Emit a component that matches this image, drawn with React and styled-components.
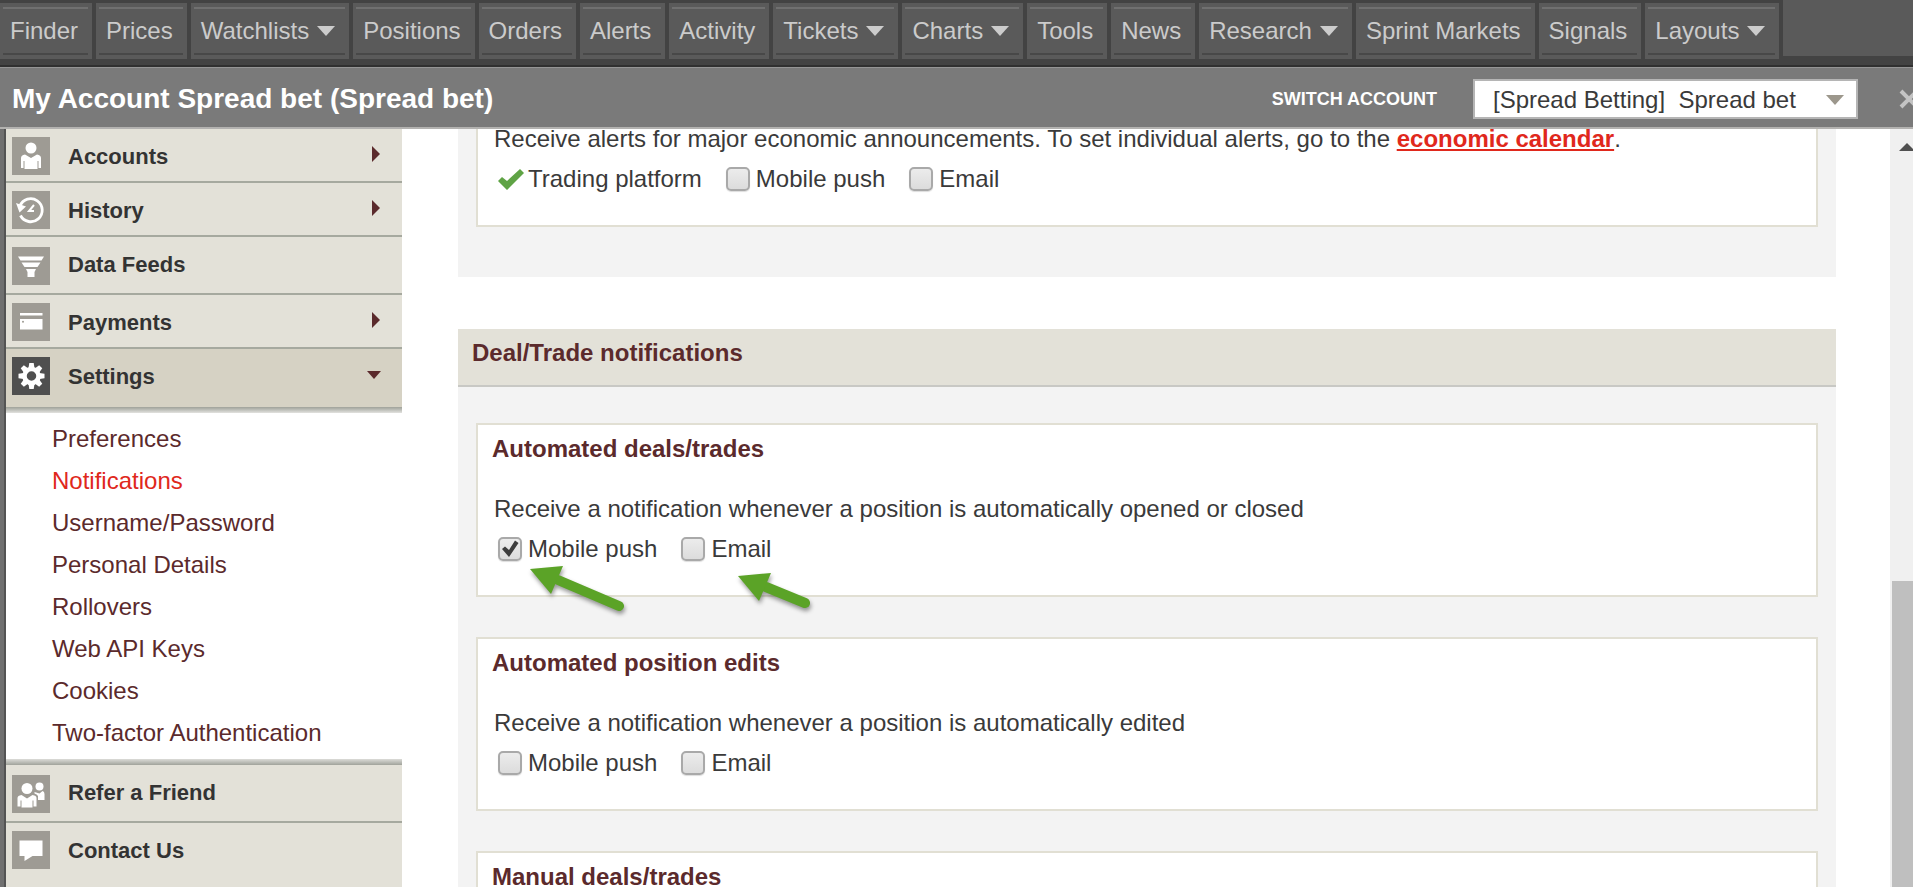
import React from "react";
import styled, { createGlobalStyle } from "styled-components";

const tabs = [
  { name: "Finder" },
  { name: "Prices" },
  { name: "Watchlists", menu: true },
  { name: "Positions" },
  { name: "Orders" },
  { name: "Alerts" },
  { name: "Activity" },
  { name: "Tickets", menu: true },
  { name: "Charts", menu: true },
  { name: "Tools" },
  { name: "News" },
  { name: "Research", menu: true },
  { name: "Sprint Markets" },
  { name: "Signals" },
  { name: "Layouts", menu: true },
];

const settingsLinks = [
  "Preferences",
  "Notifications",
  "Username/Password",
  "Personal Details",
  "Rollovers",
  "Web API Keys",
  "Cookies",
  "Two-factor Authentication",
];

const gearTeeth = [0, 45, 90, 135, 180, 225, 270, 315];

const icons = {
  accounts: (
    <g fill="#fff">
      <circle cx="19" cy="11" r="5.5" />
      <path d="M9 31V21q0-3 4-3.500l6 3.500 6-3.500q4 .5 4 3.500v10h-2.500v-7h-1v8h-13v-8h-1v7z" />
    </g>
  ),
  history: (
    <g fill="none" stroke="#fff" strokeWidth="2.800">
      <path d="M8 15a11.500 11.500 0 1 1 .5 9.500" />
      <path d="M4 12l10 3.500-6.500 6z" fill="#fff" stroke="none" />
      <path d="M22 14l-5 6h5" strokeWidth="2" />
    </g>
  ),
  feeds: (
    <g fill="#fff">
      <path d="M6 9.500h26l-2.500 4h-21z" />
      <path d="M9.500 15.500h19l-3 4.500h-13z" />
      <path d="M14 22h10l-1.500 3v5h-7v-5z" />
    </g>
  ),
  payments: (
    <g fill="#fff">
      <path d="M8 10h22.500v2.500H8z" />
      <path d="M8 16h22.500v10.500H8z" />
      <circle cx="11" cy="18.700" r="1" fill="#9e9b94" />
    </g>
  ),
  settings: (
    <g fill="#fff">
      {gearTeeth.map((a) => (
        <path
          key={a}
          d="M17.300 6h4.400l.8 5h-6z"
          transform={`rotate(${a} 19.500 19)`}
        />
      ))}
      <circle cx="19.500" cy="19" r="7" fill="none" stroke="#fff" strokeWidth="4.500" />
    </g>
  ),
  refer: (
    <g fill="#fff">
      <circle cx="27.500" cy="11.500" r="4" />
      <path d="M22.500 17l5 1.500 3-2.500q2 .5 2 3v6h-6.500v-4q-1-2-3.500-2.500z" />
      <circle cx="15" cy="13.500" r="5.500" />
      <path d="M5.500 31.500V23q0-2.500 4-3l5.500 3.500 5.500-3.500q4 .5 4 3v8.500h-3v-6h-1v7h-11v-7h-1v6z" />
    </g>
  ),
  contact: <path d="M7.500 9.500h23v15.500H20.500l-8 5v-5h-5z" fill="#fff" />,
};

const MenuItem = ({ icon, name, tall, low, active, last, arrow }) => (
  <Item href="#" $tall={tall} $active={active} $last={last}>
    <Tile $active={active} $low={low} viewBox="0 0 38 38" aria-hidden="true">
      {icons[icon]}
    </Tile>
    <ItemText>{name}</ItemText>
    {arrow === "right" && (
      <RightArrow viewBox="0 0 8 16">
        <path d="M0 0l8 8-8 8z" fill="#5b2a2c" />
      </RightArrow>
    )}
    {arrow === "down" && (
      <DownArrow viewBox="0 0 16 8">
        <path d="M1 0h14L8 8z" fill="#5b2a2c" />
      </DownArrow>
    )}
  </Item>
);

const Tick = ({ label, checked }) => (
  <Option>
    <BoxWrap>
      <Checkbox type="checkbox" defaultChecked={checked} />
      {checked && (
        <Mark viewBox="0 0 24 24">
          <path d="M4 12l3-2.500 4 3.500 6-9.500 3.500 2.500L11 20z" fill="#3d3d3d" />
        </Mark>
      )}
    </BoxWrap>
    {label}
  </Option>
);

const App = () => {
  return (
    <Page>
      <GlobalStyle />
      <Nav>
        {tabs.map((tab) => (
          <Tab key={tab.name}>
            {tab.name}
            {tab.menu && (
              <Caret viewBox="0 0 18 10">
                <path d="M0 0h18L9 10z" fill="#ccc" />
              </Caret>
            )}
          </Tab>
        ))}
        <NavRest />
      </Nav>
      <Header>
        <h1>My Account Spread bet (Spread bet)</h1>
        <SwitchLabel htmlFor="account">SWITCH ACCOUNT</SwitchLabel>
        <SelectWrap>
          <Select id="account">
            <option>{"[Spread Betting]\u00a0 Spread bet"}</option>
          </Select>
          <SelectCaret viewBox="0 0 18 10">
            <path d="M0 0h18L9 10z" fill="#9c978c" />
          </SelectCaret>
        </SelectWrap>
        <Close aria-label="Close">
          <svg width="20" height="20" viewBox="0 0 20 20">
            <path d="M2 2l16 16M18 2L2 18" stroke="#c4c4c4" strokeWidth="4" />
          </svg>
        </Close>
      </Header>
      <Main>
        <Sidebar>
          <MenuItem icon="accounts" name="Accounts" arrow="right" />
          <MenuItem icon="history" name="History" arrow="right" />
          <MenuItem icon="feeds" name="Data Feeds" tall low />
          <MenuItem icon="payments" name="Payments" arrow="right" />
          <MenuItem icon="settings" name="Settings" tall active last arrow="down" />
          <SubMenu>
            {settingsLinks.map((link) => (
              <SubLink href="#" key={link} $current={link === "Notifications"}>
                {link}
              </SubLink>
            ))}
          </SubMenu>
          <MenuItem icon="refer" name="Refer a Friend" tall low />
          <MenuItem icon="contact" name="Contact Us" tall last />
        </Sidebar>
        <Content>
          <Section $scrolled>
            <Card $open>
              <CardText>
                Receive alerts for major economic announcements. To set
                individual alerts, go to the{" "}
                <CalendarLink href="#">economic calendar</CalendarLink>.
              </CardText>
              <Options>
                <Fixed>
                  <svg width="26" height="24" viewBox="0 0 26 24">
                    <path d="M0 14l4-4 5 4L22 2l4 4L9 23z" fill="#5fa345" />
                  </svg>
                  Trading platform
                </Fixed>
                <Tick label="Mobile push" />
                <Tick label="Email" />
              </Options>
            </Card>
          </Section>
          <Section>
            <SectionTitle>Deal/Trade notifications</SectionTitle>
            <Cards>
              <Card>
                <h3>Automated deals/trades</h3>
                <CardText>
                  Receive a notification whenever a position is automatically
                  opened or closed
                </CardText>
                <Options>
                  <Tick label="Mobile push" checked />
                  <Tick label="Email" />
                </Options>
                <Pointer $left={48} $top={138} viewBox="0 0 104 56">
                  <path d="M32 17l61 26" stroke="#5ba327" strokeWidth="10" strokeLinecap="round" />
                  <path d="M4 6l33-3-12 28z" fill="#5ba327" />
                </Pointer>
                <Pointer $left={256} $top={145} viewBox="0 0 104 56">
                  <path d="M32 17l39 16" stroke="#5ba327" strokeWidth="10" strokeLinecap="round" />
                  <path d="M4 6l33-3-12 28z" fill="#5ba327" />
                </Pointer>
              </Card>
              <Card>
                <h3>Automated position edits</h3>
                <CardText>
                  Receive a notification whenever a position is automatically
                  edited
                </CardText>
                <Options>
                  <Tick label="Mobile push" />
                  <Tick label="Email" />
                </Options>
              </Card>
              <Card>
                <h3>Manual deals/trades</h3>
              </Card>
            </Cards>
          </Section>
        </Content>
        <Scrollbar>
          <ScrollUp>
            <svg width="16" height="8" viewBox="0 0 16 8">
              <path d="M0 8l8-8 8 8z" fill="#505050" />
            </svg>
          </ScrollUp>
          <Thumb />
        </Scrollbar>
      </Main>
    </Page>
  );
};

export default App;

const GlobalStyle = createGlobalStyle`
  * {
    box-sizing: border-box;
  }
  body {
    margin: 0;
    font-family: "Liberation Sans", Arial, sans-serif;
    font-size: 24px;
    color: #3a3a3a;
  }
  button, select, input {
    font: inherit;
    margin: 0;
  }
  h1, h2, h3, p {
    margin: 0;
  }
  svg {
    display: block;
    flex: none;
  }
`;

const Page = styled.div`
  height: 100vh;
  display: flex;
  flex-direction: column;
  overflow: hidden;
  background: #707070;
`;
const Nav = styled.nav`
  flex: none;
  height: 67px;
  display: flex;
  align-items: flex-start;
  gap: 4px;
  background: #434343;
  border-bottom: 2px solid #303030;
`;
const Tab = styled.button`
  flex: none;
  height: 56px;
  margin-top: 3px;
  padding: 0 14px 0 10px;
  display: flex;
  align-items: center;
  gap: 8px;
  border: none;
  color: #cbcbcb;
  white-space: nowrap;
  background:
    linear-gradient(#707070, #707070) 3px 4px / calc(100% - 7px) 2px no-repeat,
    linear-gradient(#484848, #484848) 3px 50px / calc(100% - 7px) 2px no-repeat,
    #5a5a5a;
`;
const Caret = styled.svg`
  width: 18px;
  height: 10px;
`;
const NavRest = styled.div`
  flex: 1;
  height: 56px;
  background: #5a5a5a;
`;
const Header = styled.header`
  flex: none;
  height: 62px;
  padding: 3px 0 0 12px;
  display: flex;
  align-items: center;
  overflow: hidden;
  background: #7a7a7a;
  border-top: 1px solid #959595;
  border-bottom: 2px solid #b3b2b0;

  h1 {
    flex: 1;
    font-size: 28px;
    line-height: 32px;
    color: #fff;
  }
`;
const SwitchLabel = styled.label`
  margin-right: 36px;
  font-size: 18px;
  font-weight: bold;
  color: #fff;
`;
const SelectWrap = styled.div`
  position: relative;
`;
const Select = styled.select`
  appearance: none;
  display: block;
  width: 385px;
  height: 40px;
  padding: 0 48px 0 18px;
  border: 2px solid #b5b5b5;
  border-radius: 0;
  background: #fff;
  color: #3a3a3a;
`;
const SelectCaret = styled.svg`
  position: absolute;
  right: 14px;
  top: 16px;
  width: 18px;
  height: 10px;
  pointer-events: none;
`;
const Close = styled.button`
  width: 55px;
  padding: 0 0 0 41px;
  border: none;
  background: none;
  overflow: hidden;
`;
const Main = styled.div`
  flex: 1;
  min-height: 0;
  display: flex;
  margin-left: 4px;
  border-left: 2px solid #545454;
  background: #fff;
`;
const Sidebar = styled.aside`
  flex: none;
  width: 396px;
  overflow: hidden;
  background: #e3e1d8;
`;
const Item = styled.a`
  height: ${(props) => (props.$tall ? 58 : 54)}px;
  padding: 8px 20px 0 6px;
  display: flex;
  align-items: flex-start;
  gap: 18px;
  text-decoration: none;
  color: #333;
  background: ${(props) => (props.$active ? "#d6d2c4" : "#e3e1d8")};
  border-bottom: ${(props) => (props.$last ? "none" : "2px solid #a6a99f")};
`;
const Tile = styled.svg`
  width: 38px;
  height: 38px;
  margin-top: ${(props) => (props.$low ? 2 : 0)}px;
  background: ${(props) => (props.$active ? "#4f4f4f" : "#9e9b94")};
`;
const ItemText = styled.span`
  flex: 1;
  padding-top: 7px;
  font-size: 22px;
  font-weight: bold;
  line-height: 26px;
`;
const RightArrow = styled.svg`
  width: 8px;
  height: 16px;
  margin: 9px 2px 0 0;
`;
const DownArrow = styled.svg`
  width: 16px;
  height: 8px;
  margin-top: 14px;
`;
const SubMenu = styled.div`
  padding: 5px 0 5px 46px;
  display: flex;
  flex-direction: column;
  background: #fff;
  border-top: 6px solid #a6a89f;
  border-bottom: 6px solid #a6a89f;
  border-image: linear-gradient(
      #a0a29a 0,
      #b4b6af 2px,
      #e2e2df 6px,
      #fff 6px,
      #fff calc(100% - 6px),
      #dcdcd8 calc(100% - 6px),
      #b4b6af calc(100% - 2px),
      #a0a29a 100%
    )
    6 0;
`;
const SubLink = styled.a`
  line-height: 42px;
  text-decoration: none;
  color: ${(props) => (props.$current ? "#e0281c" : "#5b2a2c")};
`;
const Content = styled.main`
  flex: 1;
  min-width: 0;
  padding: 0 54px 0 56px;
  display: flex;
  flex-direction: column;
  gap: 52px;
  overflow: hidden;
`;
/* $scrolled: the section is cut by the top of the scroll area */
const Section = styled.section`
  flex: none;
  margin-top: ${(props) => (props.$scrolled ? -10 : 0)}px;
  padding-bottom: ${(props) => (props.$scrolled ? 50 : 0)}px;
  background: #f3f3f3;
  ${(props) => props.$scrolled && "padding-left: 18px; padding-right: 18px;"}
`;
const SectionTitle = styled.h2`
  padding: 4px 14px 12px;
  font-size: 24px;
  line-height: 40px;
  color: #5b2a2c;
  background: #e3e1d8;
  border-bottom: 2px solid #c8c8c4;
`;
const Cards = styled.div`
  padding: 36px 18px;
  display: flex;
  flex-direction: column;
  gap: 40px;
`;
const Card = styled.div`
  position: relative;
  padding: ${(props) => (props.$open ? 0 : 4)}px 14px 26px;
  background: #fff;
  border: 2px solid #e1dfd3;
  ${(props) => props.$open && "border-top: none;"}

  h3 {
    margin-bottom: 20px;
    font-size: 24px;
    line-height: 40px;
    color: #5b2a2c;
  }
`;
const CardText = styled.p`
  padding-left: 2px;
  line-height: 40px;
`;
const CalendarLink = styled.a`
  font-weight: bold;
  color: #e0281c;
`;
const Options = styled.div`
  height: 40px;
  padding-left: 6px;
  display: flex;
  align-items: center;
  gap: 24px;
`;
const Option = styled.label`
  display: flex;
  align-items: center;
  gap: 6px;
  line-height: 40px;
`;
const Fixed = styled.span`
  display: flex;
  align-items: center;
  gap: 4px;
  line-height: 40px;
`;
const BoxWrap = styled.span`
  position: relative;
  width: 24px;
  height: 24px;
`;
const Checkbox = styled.input`
  appearance: none;
  display: block;
  width: 24px;
  height: 24px;
  border: 2px solid #a9a9a9;
  border-radius: 5px;
  background: linear-gradient(#ececec, #dcdcdc);
  box-shadow: 0 1px 1px #ddd;
`;
const Mark = styled.svg`
  position: absolute;
  inset: 0;
  pointer-events: none;
`;
const Pointer = styled.svg`
  position: absolute;
  left: ${(props) => props.$left}px;
  top: ${(props) => props.$top}px;
  width: 104px;
  height: 56px;
  overflow: visible;
  filter: drop-shadow(1px 3px 2px rgba(0, 0, 0, 0.4));
  pointer-events: none;
`;
const Scrollbar = styled.div`
  flex: none;
  width: 23px;
  padding-left: 2px;
  display: grid;
  grid-template-rows: 452fr 306fr;
  background: #f0f0f0;
`;
const ScrollUp = styled.div`
  padding: 14px 0 0 7px;
  overflow: hidden;
`;
const Thumb = styled.div`
  background: #bfbfbf;
`;
